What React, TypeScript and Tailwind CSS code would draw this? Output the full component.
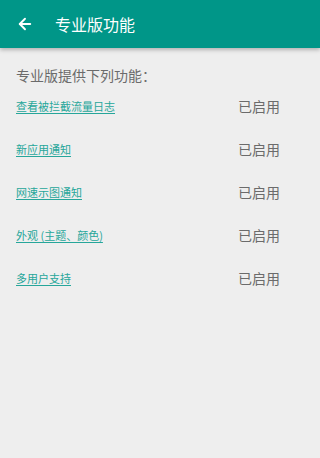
import { ArrowLeft } from 'lucide-react';

const features = ['查看被拦截流量日志', '新应用通知', '网速示图通知', '外观 (主题、颜色)', '多用户支持'];

const App = () => {
  return (
    <div
      className="w-[320px] h-[458px] bg-[#eeeeee] overflow-hidden"
      style={{ fontFamily: '"Noto Sans CJK SC", Roboto, sans-serif' }}
    >
      <div className="h-[48px] bg-[#009688] flex items-center shadow-[0_2px_4px_rgba(0,0,0,0.25)] relative z-10">
        <ArrowLeft className="w-[18px] h-[18px] text-white ml-[16px]" strokeWidth={2.5} />
        <span className="ml-[21px] text-white text-[16px] leading-none">专业版功能</span>
      </div>
      <div className="pl-[16px] pr-[40px] pt-[17px]">
        <p className="text-[14px] leading-[20px] text-[#6b6b6b]">专业版提供下列功能：</p>
        {features.map((f) => (
          <div key={f} className="h-[43px] flex items-center justify-between">
            <a className="text-[11px] text-[#26a69a] underline underline-offset-2">{f}</a>
            <span className="text-[14px] text-[#6b6b6b]">已启用</span>
          </div>
        ))}
      </div>
    </div>
  );
};

export default App;
